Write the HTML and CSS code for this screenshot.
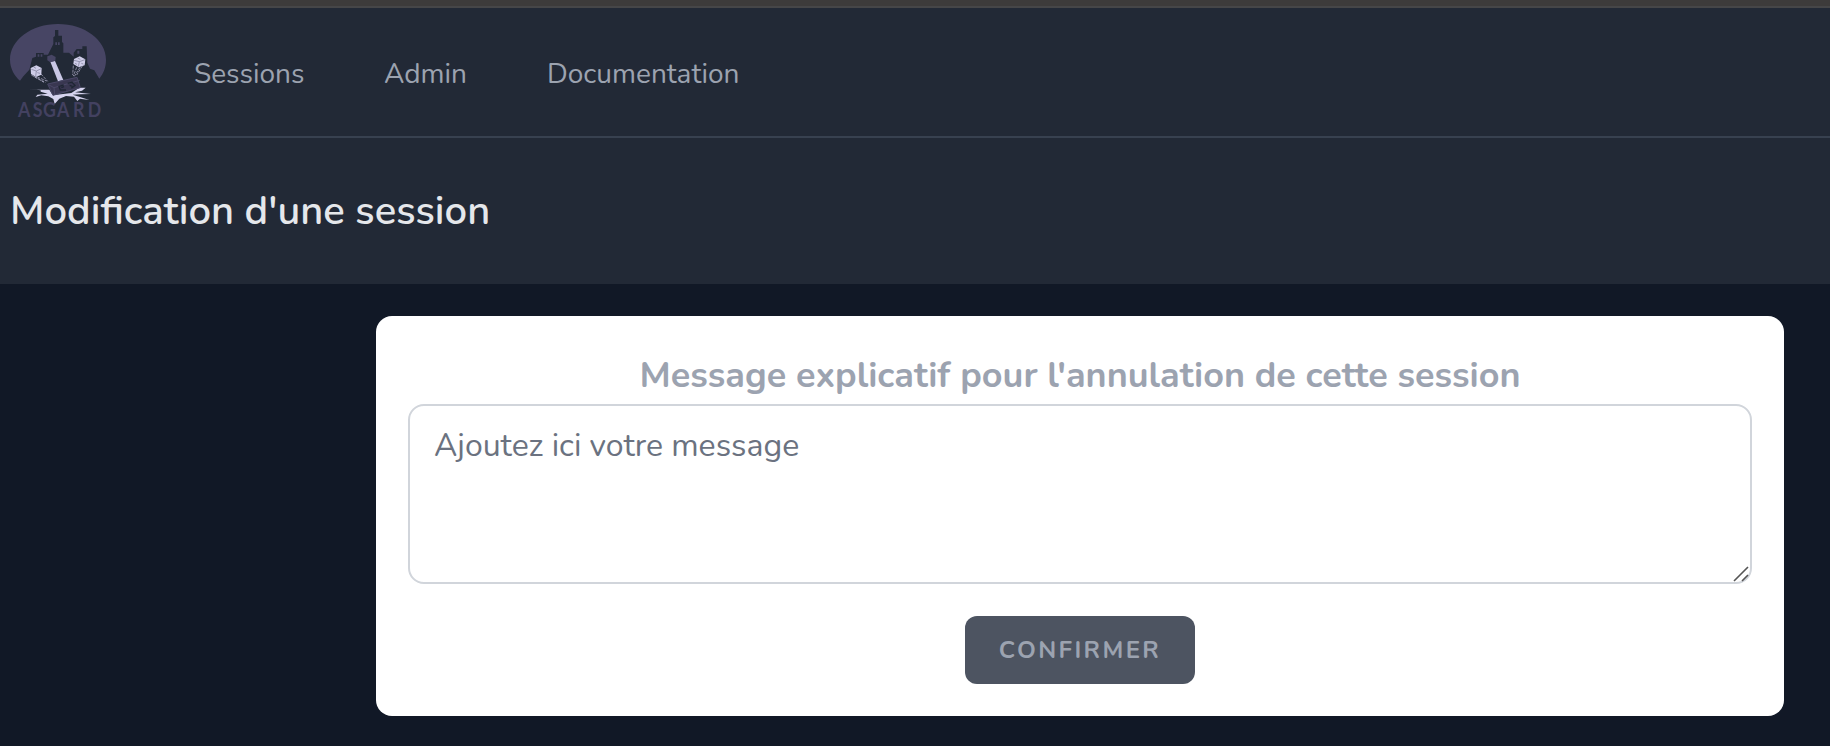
FILE: index.html
```html
<!DOCTYPE html>
<html lang="fr">
<head>
<meta charset="utf-8">
<title>Modification d'une session</title>
<link rel="stylesheet" href="styles.css">
</head>
<body>
<div class="topbar"></div>
<nav class="nav">
  <a class="logo" href="#">
    <svg viewBox="24 60 300 300" width="100" height="100" aria-label="Asgard">
      <path fill="#474564" d="M60 242C44 228 30 206 30 179C30 120 94 72 174 72S318 120 318 179C318 201 311 219 298 236L283 211L270 206L262 188L260 139H247V147H230L221 158V170L207 158H190V130L186 126V107H175V90H165V108L160 112V132L151 150L144 164H131V159H108V170L97 174L88 209L70 229Z"/>
      <path fill="#474564" d="M113 163h5v7h-5zM122 163h5v7h-5zM166 127h5v8h-5zM174 127h5v8h-5zM232 152h6v9h-6z"/>
      <path fill="#c9c7e5" d="M151 185L165 183L190 240L174 244Z"/>
      <path fill="#474564" d="M142 169L155 164L167 171L166 182L151 187L142 181Z"/>
      <path fill="#cfcde8" d="M92 204L109 196L125 204L124 224L108 231L93 222ZM222 177L239 169L256 178L254 196L236 202L220 192Z"/>
      <path fill="none" stroke="#5b5a76" stroke-width="1.5" d="M94 208L109 213L124 206M109 213L107 229M101 201l7 4M112 218l8 2M222 181L238 185L255 179M238 185L235 200M233 174l8 4M225 190l6 3M244 190l6 2"/>
      <path fill="none" stroke="#b9b7d2" stroke-width="2" stroke-dasharray="9 3" d="M94 225L132 247M103 230L136 247M112 231L140 243M123 222L143 244M220 197L218 225M230 202L220 228M240 202L223 229M247 198L230 225"/>
      <path fill="#d5d3ee" d="M80 266L110 269L148 269L158 286L214 279L238 263L257 263L246 272L225 277L273 282L240 283L218 284L240 291L268 300L240 296L232 303L222 290L198 288L178 296L164 312L160 297L145 289L124 286L107 291L112 284L143 281L122 275L122 271Z"/>
      <path fill="#393751" stroke="#4b4968" stroke-width="3" stroke-linejoin="round" d="M143 252L231 232L241 263L159 286Z"/>
      <path fill="none" stroke="#4b4968" stroke-width="3" d="M147 255L162 263L239 241M162 263L164 283"/>
      <path fill="none" stroke="#1f2634" stroke-width="4" d="M191 255L177 259L181 270L198 270M203 250L216 247L225 256L214 265M184 263l8-3M209 256l8 3"/>
      <text class="logo-text" transform="scale(.86 1)" x="63 114 150 199 255 306" y="351">ASGARD</text>
    </svg>
  </a>
  <a class="link sessions" href="#">Sessions</a>
  <a class="link admin" href="#">Admin</a>
  <a class="link documentation" href="#">Documentation</a>
</nav>
<header class="header"><h1 class="title">Modification d'une session</h1></header>
<main class="main">
  <form class="card">
    <label class="label" for="message"><span>Message explicatif pour l'annulation de cette session</span></label>
    <div class="field">
      <textarea class="message" id="message" placeholder="Ajoutez ici votre message"></textarea>
      <svg class="grip" viewBox="0 0 16 16" width="16" height="16"><path d="M1 15L15 1M9 15L15 9"/></svg>
    </div>
    <button class="confirm" type="button">CONFIRMER</button>
  </form>
</main>
</body>
</html>
```
FILE: styles.css
```css
* { box-sizing: border-box; }
body {
  margin: 0;
  height: 746px;
  overflow: hidden;
  background: #111826;
  font-family: Nunito, "Open Sans", "Noto Sans", sans-serif;
}
.topbar { height: 8px; background: #3d3b3b; border-bottom: 2px solid #464648; }
.nav {
  display: flex;
  align-items: center;
  height: 130px;
  padding-left: 8px;
  background: #222936;
  border-bottom: 2px solid #384150;
}
.logo { width: 100px; height: 100px; margin: 0 86px 4px 0; }
.logo svg { display: block; overflow: visible; }
.logo-text { font: 700 62px Lato, sans-serif; fill: #434160; }
.link {
  color: #9ca3b0;
  padding-top: 4px;
  font-size: 28px;
  line-height: 40px;
  font-weight: 400;
  text-decoration: none;
  white-space: nowrap;
}
.sessions { width: 190px; }
.admin { width: 163px; }
.header {
  display: flex;
  align-items: center;
  height: 146px;
  padding: 0 0 0 10px;
  background: #222936;
}
.title { margin: 0; color: #e5e7eb; font-size: 40px; font-weight: 600; line-height: 50px; white-space: nowrap; }
.main { padding: 32px 46px 0 376px; }
.card {
  display: flex;
  flex-direction: column;
  align-items: center;
  height: 400px;
  padding: 32px;
  border-radius: 16px;
  background: #fff;
}
.label { height: 56px; padding-top: 3px; color: #9ca3b0; font-size: 36px; font-weight: 700; line-height: 50px; white-space: nowrap; }
.field { position: relative; width: 100%; height: 180px; }
.message {
  display: block;
  width: 100%;
  height: 180px;
  padding: 16px 24px;
  border: 2px solid #d1d5db;
  border-radius: 16px;
  background: #fff;
  font: 400 32px/48px Nunito, "Open Sans", "Noto Sans", sans-serif;
  resize: none;
}
.message::placeholder { color: #6b7280; opacity: 1; }
.grip { position: absolute; right: 3px; bottom: 2px; fill: none; stroke: #555; stroke-width: 1.6; }
.confirm {
  width: 230px;
  height: 68px;
  margin-top: 32px;
  padding: 0;
  border: 0;
  border-radius: 12px;
  background: #4d5461;
  color: #9ca3b0;
  font: 700 24px/32px Nunito, "Open Sans", "Noto Sans", sans-serif;
  letter-spacing: 2.4px;
}
```
